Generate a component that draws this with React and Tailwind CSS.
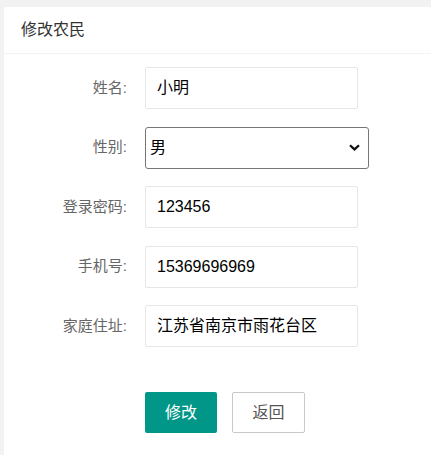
import React from "react";

const font = { fontFamily: '"Liberation Sans", "Noto Sans CJK SC", sans-serif' };

function Row({ label, children }) {
  return (
    <div className="flex items-center h-[42px]">
      <div className="w-[124px] text-right text-[15px] text-[#666] pr-[1px]">{label}</div>
      <div className="ml-[17px] h-full">{children}</div>
    </div>
  );
}

function TextInput({ value }) {
  return (
    <div className="w-[213px] h-[42px] border border-[#e6e6e6] rounded-[2px] flex items-center pl-[11px] text-[16px] text-black bg-white">
      {value}
    </div>
  );
}

export default function App() {
  return (
    <div className="min-h-[455px] bg-[#f2f2f2] pl-[4px] pt-[7px] overflow-hidden" style={font}>
      <div className="bg-white min-h-[448px] rounded-tl-[2px]">
        <div className="h-[47px] border-b border-[#f3f3f3] flex items-center pl-[17px] text-[16px] text-[#333] pb-[1px]">
          修改农民
        </div>
        <div className="pt-[13px] flex flex-col gap-[17.5px]">
          <Row label="姓名:">
            <TextInput value="小明" />
          </Row>
          <Row label="性别:">
            <div className="w-[224px] h-[42px] border border-[#767676] rounded-[3px] flex items-center pl-[4px] pr-[8px] text-[16px] text-black bg-white">
              <span className="flex-1">男</span>
              <svg width="11" height="7" viewBox="0 0 11 7" fill="none">
                <path d="M1 1.2 L5.5 5.4 L10 1.2" stroke="#111" strokeWidth="2.2" />
              </svg>
            </div>
          </Row>
          <Row label="登录密码:">
            <TextInput value="123456" />
          </Row>
          <Row label="手机号:">
            <TextInput value="15369696969" />
          </Row>
          <Row label="家庭住址:">
            <TextInput value="江苏省南京市雨花台区" />
          </Row>
        </div>
        <div className="flex pl-[141px] mt-[45px] gap-[15px]">
          <button className="w-[72px] h-[41px] bg-[#009688] text-white text-[16px] rounded-[2px]">修改</button>
          <button className="w-[73px] h-[41px] border border-[#c9c9c9] bg-white text-[#555] text-[16px] rounded-[2px]">返回</button>
        </div>
      </div>
    </div>
  );
}
